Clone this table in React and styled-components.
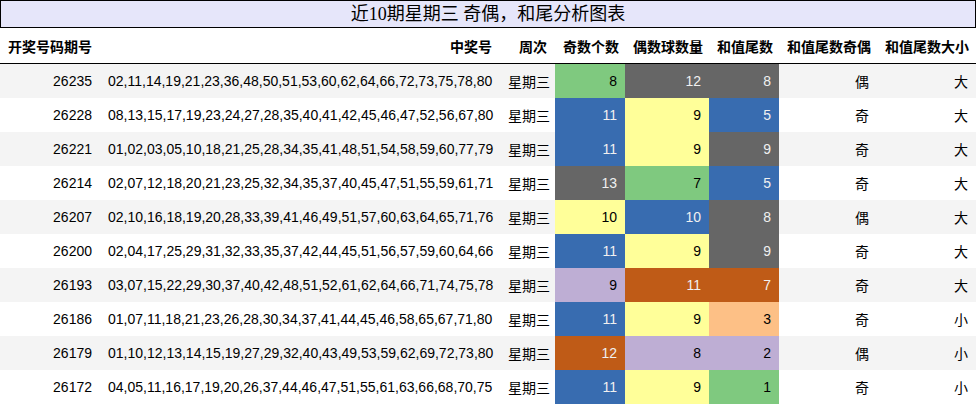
import React from 'react'
import styled, { createGlobalStyle } from 'styled-components'

const GlobalStyle = createGlobalStyle`
  html, body {
    margin: 0;
    padding: 0;
    background: #fff;
  }
  body {
    font-family: "Liberation Sans", "Noto Sans CJK SC", sans-serif;
    color: #000;
  }
`

// colorbrewer accent palette
const accent = {
  green: '#7fc97f',
  purple: '#beaed4',
  peach: '#fdc086',
  yellow: '#ffff99',
  blue: '#386cb0',
  brown: '#bf5b17',
  gray: '#666666'
}
const darkOnes = ['blue', 'brown', 'gray']

const columns = [
  { title: '开奖号码期号', width: 100, align: 'left' },
  { title: '中奖号', width: 400 },
  { title: '周次', width: 55 },
  { title: '奇数个数', width: 70 },
  { title: '偶数球数量', width: 84 },
  { title: '和值尾数', width: 70 },
  { title: '和值尾数奇偶', width: 98 },
  { title: '和值尾数大小', width: 99 }
]

const rows = [
  ['26235', '02,11,14,19,21,23,36,48,50,51,53,60,62,64,66,72,73,75,78,80', [8, 'green'], [12, 'gray'], [8, 'gray'], '偶', '大'],
  ['26228', '08,13,15,17,19,23,24,27,28,35,40,41,42,45,46,47,52,56,67,80', [11, 'blue'], [9, 'yellow'], [5, 'blue'], '奇', '大'],
  ['26221', '01,02,03,05,10,18,21,25,28,34,35,41,48,51,54,58,59,60,77,79', [11, 'blue'], [9, 'yellow'], [9, 'gray'], '奇', '大'],
  ['26214', '02,07,12,18,20,21,23,25,32,34,35,37,40,45,47,51,55,59,61,71', [13, 'gray'], [7, 'green'], [5, 'blue'], '奇', '大'],
  ['26207', '02,10,16,18,19,20,28,33,39,41,46,49,51,57,60,63,64,65,71,76', [10, 'yellow'], [10, 'blue'], [8, 'gray'], '偶', '大'],
  ['26200', '02,04,17,25,29,31,32,33,35,37,42,44,45,51,56,57,59,60,64,66', [11, 'blue'], [9, 'yellow'], [9, 'gray'], '奇', '大'],
  ['26193', '03,07,15,22,29,30,37,40,42,48,51,52,61,62,64,66,71,74,75,78', [9, 'purple'], [11, 'brown'], [7, 'brown'], '奇', '大'],
  ['26186', '01,07,11,18,21,23,26,28,30,34,37,41,44,45,46,58,65,67,71,80', [11, 'blue'], [9, 'yellow'], [3, 'peach'], '奇', '小'],
  ['26179', '01,10,12,13,14,15,19,27,29,32,40,43,49,53,59,62,69,72,73,80', [12, 'brown'], [8, 'purple'], [2, 'purple'], '偶', '小'],
  ['26172', '04,05,11,16,17,19,20,26,37,44,46,47,51,55,61,63,66,68,70,75', [11, 'blue'], [9, 'yellow'], [1, 'green'], '奇', '小']
]

// #region styled components
const Page = styled.div`
  width: 976px;
`
const Title = styled.div`
  height: 26px;
  border: 1px solid #000;
  background-color: #e6e6fa;
  font-family: "Liberation Serif", "Noto Sans CJK SC", serif;
  font-size: 18px;
  line-height: 26px;
  text-align: center;
`
const Table = styled.table`
  width: 976px;
  border-collapse: collapse;
  table-layout: fixed;
  font-size: 14px;
`
const HeadCell = styled.th`
  height: 35px;
  padding: 0 8px;
  font-weight: bold;
  text-align: ${({ align }) => align || 'right'};
  border-bottom: 1px solid #000;
  white-space: nowrap;
`
const Row = styled.tr`
  background-color: ${({ odd }) => (odd ? '#f4f4f4' : '#fff')};
`
const Cell = styled.td`
  height: 34px;
  padding: 0 8px;
  text-align: right;
  white-space: nowrap;
`
const ColorCell = styled(Cell)`
  background-color: ${({ tone }) => accent[tone]};
  color: ${({ tone }) => (darkOnes.includes(tone) ? '#f0f0f0' : '#000')};
`
//#endregion

export default function App() {
  return (
    <Page>
      <GlobalStyle />
      <Title>近10期星期三 奇偶，和尾分析图表</Title>
      <Table>
        <colgroup>
          {columns.map((c) => <col key={c.title} style={{ width: c.width }} />)}
        </colgroup>
        <thead>
          <tr>
            {columns.map((c) => (
              <HeadCell key={c.title} align={c.align}>{c.title}</HeadCell>
            ))}
          </tr>
        </thead>
        <tbody>
          {rows.map((r, i) => (
            <Row key={r[0]} odd={i % 2 === 0}>
              <Cell>{r[0]}</Cell>
              <Cell>{r[1]}</Cell>
              <Cell>星期三</Cell>
              {[r[2], r[3], r[4]].map(([v, tone], j) => (
                <ColorCell key={j} tone={tone}>{v}</ColorCell>
              ))}
              <Cell>{r[5]}</Cell>
              <Cell>{r[6]}</Cell>
            </Row>
          ))}
        </tbody>
      </Table>
    </Page>
  )
}
